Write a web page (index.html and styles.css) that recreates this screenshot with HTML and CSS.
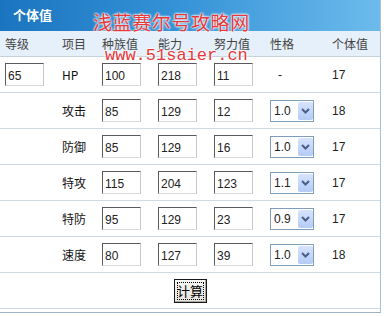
FILE: index.html
```html
<!DOCTYPE html>
<html lang="zh-CN">
<head>
  <meta charset="UTF-8" />
  <title>个体值</title>
  <link rel="stylesheet" href="styles.css">
</head>
<body>
  <div class="panel">
    <div class="panel-title">个体值</div>

    <div class="grid head">
      <span class="cell">等级</span>
      <span class="cell">项目</span>
      <span class="cell">种族值</span>
      <span class="cell">能力</span>
      <span class="cell">努力值</span>
      <span class="cell">性格</span>
      <span class="cell">个体值</span>
    </div>

    <div class="grid row">
      <span class="cell"><input class="num" type="text" value="65"></span>
      <span class="cell">HP</span>
      <span class="cell"><input class="num" type="text" value="100"></span>
      <span class="cell"><input class="num" type="text" value="218"></span>
      <span class="cell"><input class="num" type="text" value="11"></span>
      <span class="cell dash">-</span>
      <span class="cell">17</span>
    </div>

    <div class="grid row">
      <span class="cell"></span>
      <span class="cell">攻击</span>
      <span class="cell"><input class="num" type="text" value="85"></span>
      <span class="cell"><input class="num" type="text" value="129"></span>
      <span class="cell"><input class="num" type="text" value="12"></span>
      <span class="cell"><span class="pick"><select><option>1.0</option></select><span class="pick-btn"><svg width="9" height="6" viewBox="0 0 9 6"><path d="M1 1 L4.5 4.5 L8 1" fill="none" stroke="#4a5f86" stroke-width="2"/></svg></span></span></span>
      <span class="cell">18</span>
    </div>

    <div class="grid row">
      <span class="cell"></span>
      <span class="cell">防御</span>
      <span class="cell"><input class="num" type="text" value="85"></span>
      <span class="cell"><input class="num" type="text" value="129"></span>
      <span class="cell"><input class="num" type="text" value="16"></span>
      <span class="cell"><span class="pick"><select><option>1.0</option></select><span class="pick-btn"><svg width="9" height="6" viewBox="0 0 9 6"><path d="M1 1 L4.5 4.5 L8 1" fill="none" stroke="#4a5f86" stroke-width="2"/></svg></span></span></span>
      <span class="cell">17</span>
    </div>

    <div class="grid row">
      <span class="cell"></span>
      <span class="cell">特攻</span>
      <span class="cell"><input class="num" type="text" value="115"></span>
      <span class="cell"><input class="num" type="text" value="204"></span>
      <span class="cell"><input class="num" type="text" value="123"></span>
      <span class="cell"><span class="pick"><select><option>1.1</option></select><span class="pick-btn"><svg width="9" height="6" viewBox="0 0 9 6"><path d="M1 1 L4.5 4.5 L8 1" fill="none" stroke="#4a5f86" stroke-width="2"/></svg></span></span></span>
      <span class="cell">17</span>
    </div>

    <div class="grid row">
      <span class="cell"></span>
      <span class="cell">特防</span>
      <span class="cell"><input class="num" type="text" value="95"></span>
      <span class="cell"><input class="num" type="text" value="129"></span>
      <span class="cell"><input class="num" type="text" value="23"></span>
      <span class="cell"><span class="pick"><select><option>0.9</option></select><span class="pick-btn"><svg width="9" height="6" viewBox="0 0 9 6"><path d="M1 1 L4.5 4.5 L8 1" fill="none" stroke="#4a5f86" stroke-width="2"/></svg></span></span></span>
      <span class="cell">17</span>
    </div>

    <div class="grid row">
      <span class="cell"></span>
      <span class="cell">速度</span>
      <span class="cell"><input class="num" type="text" value="80"></span>
      <span class="cell"><input class="num" type="text" value="127"></span>
      <span class="cell"><input class="num" type="text" value="39"></span>
      <span class="cell"><span class="pick"><select><option>1.0</option></select><span class="pick-btn"><svg width="9" height="6" viewBox="0 0 9 6"><path d="M1 1 L4.5 4.5 L8 1" fill="none" stroke="#4a5f86" stroke-width="2"/></svg></span></span></span>
      <span class="cell">18</span>
    </div>

    <div class="actions">
      <button class="calc-btn">计算</button>
    </div>

    <!-- site watermark stamped over the picture -->
    <div class="watermark">
      <div class="wm-name">浅蓝赛尔号攻略网</div>
      <div class="wm-url">www.51saier.cn</div>
    </div>
  </div>
</body>
</html>
```

FILE: styles.css
```css
body {
  margin: 0;
  background: #fff;
  font-family: "Liberation Sans", "Noto Sans CJK SC", sans-serif;
  font-size: 12px;
  color: #222;
}

.panel {
  position: relative;
  width: 380px;
  border-right: 1px solid #a9c2d8;
  border-bottom: 1px solid #9fb2c6;
  padding-bottom: 3px;
}

.panel-title {
  height: 31px;
  line-height: 30px;
  padding-left: 13px;
  color: #fff;
  font-weight: bold;
  font-size: 13px;
  font-family: "Noto Sans CJK SC", sans-serif;
  background: linear-gradient(to right, #1b74bf 0%, #3391d6 45%, #6cbbec 100%);
}

.grid {
  display: grid;
  grid-template-columns: 57px 40px 56px 56px 56px 62px 53px;
  align-items: center;
}

.cell {
  padding-left: 5px;
  display: flex;
  align-items: center;
}

.head {
  height: 25px;
  background: #e6f0fa;
  border-bottom: 1px solid #c5d2de;
  color: #444;
  font-family: "Noto Sans CJK SC", sans-serif;
}

.row {
  height: 35px;
  border-bottom: 1px solid #cfdae4;
}

.row .cell:nth-child(2) {
  font-family: "Noto Sans CJK SC", sans-serif;
  color: #111;
}

.dash {
  padding-left: 13px;
}

.num {
  box-sizing: border-box;
  width: 39px;
  height: 23px;
  margin: 0;
  padding: 3px 0 0 2px;
  font-family: "Liberation Sans", sans-serif;
  font-size: 12px;
  color: #222;
  border: 1px solid;
  border-color: #5a5a5a #c8c8c8 #d8d8d8 #5a5a5a;
  background: #fff;
}

.pick {
  box-sizing: border-box;
  display: flex;
  align-items: center;
  width: 44px;
  height: 22px;
  border: 1px solid #7f9db9;
  background: #fff;
}

.pick select {
  appearance: none;
  -webkit-appearance: none;
  width: 27px;
  border: none;
  background: transparent;
  padding: 0 0 0 3px;
  margin: 0;
  font-family: "Liberation Sans", sans-serif;
  font-size: 12px;
  color: #222;
}

.pick-btn {
  width: 15px;
  height: 18px;
  display: flex;
  align-items: center;
  justify-content: center;
  background: linear-gradient(#d6e3fd, #b4cbf6);
  border-radius: 2px;
}

.actions {
  height: 35px;
  display: flex;
  justify-content: center;
  align-items: center;
  border-bottom: 1px solid #cfdae4;
}

.calc-btn {
  width: 33px;
  height: 24px;
  padding: 0;
  font-family: "Noto Sans CJK SC", sans-serif;
  font-size: 13px;
  color: #000;
  background: linear-gradient(#f7f7f4, #e6e4dc);
  border: 1px solid #1a1a1a;
  box-shadow: inset -1px -1px #a8a8a0;
  outline: 1px dotted #000;
  outline-offset: -4px;
}

.watermark {
  position: absolute;
  left: 93px;
  top: 9px;
  color: #e5393b;
  text-shadow: 0 0 2px #fff, 0 0 2px #fff, 0 0 3px #fff;
  pointer-events: none;
}

.wm-name {
  font-family: "Noto Sans CJK SC", sans-serif;
  font-size: 19px;
  letter-spacing: 0.6px;
  line-height: 26px;
}

.wm-url {
  margin-top: 12px;
  margin-left: 12px;
  font-family: "Liberation Mono", monospace;
  font-size: 17px;
  line-height: 18px;
}
```
